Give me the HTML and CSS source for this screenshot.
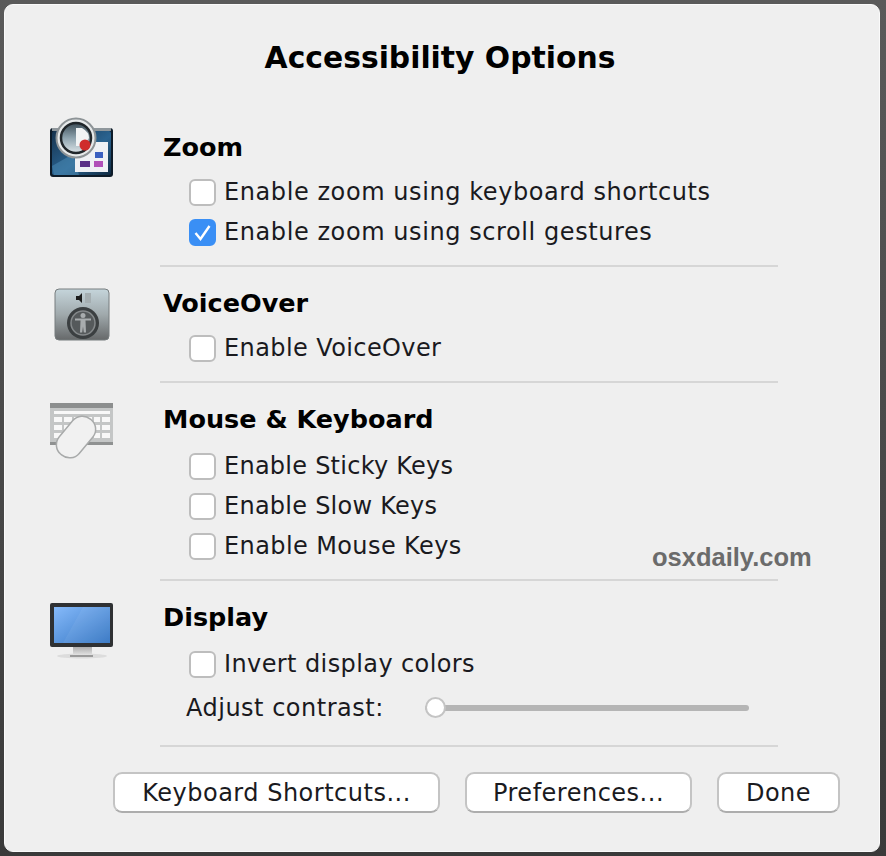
FILE: index.html
```html
<!DOCTYPE html>
<html lang="en">
<head>
<meta charset="utf-8">
<title>Accessibility Options</title>
<link rel="stylesheet" href="styles.css">
</head>
<body>
<main class="dialog">
  <h1 class="title">Accessibility Options</h1>

  <section class="section sec-zoom">
    <div class="icon">
      <svg width="66" height="64" viewBox="0 0 66 64">
        <defs>
          <linearGradient id="zb" x1="0" y1="0" x2="1" y2="1"><stop offset="0" stop-color="#16334e"/><stop offset=".55" stop-color="#2a6390"/><stop offset="1" stop-color="#0f2a42"/></linearGradient>
          <linearGradient id="zl" x1="0" y1="0" x2="0" y2="1"><stop offset="0" stop-color="#3d4e58"/><stop offset=".5" stop-color="#8ea3ae"/><stop offset="1" stop-color="#dbe3e7"/></linearGradient>
        </defs>
        <rect x="1" y="12" width="63" height="49" rx="3" fill="#0d1b28"/>
        <rect x="3" y="15" width="59" height="44" rx="2" fill="url(#zb)"/>
        <rect x="3" y="12" width="59" height="3" fill="#8f979c"/>
        <path d="M3 50 L24 38 L30 59 H5 Z" fill="#4a8ab4" opacity=".55"/>
        <rect x="26" y="26" width="33" height="30" fill="#eef0f4"/>
        <rect x="46" y="36" width="8" height="6" fill="#3a5fc0"/>
        <rect x="31" y="45" width="10" height="6" fill="#5a2f86"/>
        <rect x="45" y="45" width="9" height="6" fill="#b050b8"/>
        <circle cx="27" cy="22" r="19.500" fill="#e6e9ea" stroke="#8d9396" stroke-width="2"/>
        <circle cx="27" cy="22" r="15" fill="url(#zl)" stroke="#20262a" stroke-width="2.500"/>
        <path d="M27 12 h6 q7 4 7 10 l-6 8 h-7 z" fill="#f1f3f4"/>
        <circle cx="36" cy="29" r="5.500" fill="#cf2c2c"/>
      </svg>
    </div>
    <div class="body">
      <h2 class="heading">Zoom</h2>
      <label class="check wide"><span class="box"></span><span>Enable zoom using keyboard shortcuts</span></label>
      <label class="check wide"><span class="box on"><svg class="tick" viewBox="0 0 23 23"><path d="M4.500 12 L9.500 18 L18.500 5" fill="none" stroke="#fff" stroke-width="2.400"/></svg></span><span>Enable zoom using scroll gestures</span></label>
    </div>
  </section>

  <section class="section sec-voice">
    <div class="icon">
      <svg width="66" height="60" viewBox="0 0 66 60">
        <defs>
          <linearGradient id="vb" x1="0" y1="0" x2="0" y2="1"><stop offset="0" stop-color="#c5d5db"/><stop offset=".5" stop-color="#a0a9ac"/><stop offset="1" stop-color="#66696a"/></linearGradient>
        </defs>
        <rect x="6" y="5" width="54" height="51" rx="4" fill="url(#vb)" stroke="#777d7f"/>
        <path d="M27 12 h3 l3 -3 v10 l-3 -3 h-3 z" fill="#1c1c1c"/>
        <path d="M36 9 h6 v10 h-6 z" fill="#a5aeb1"/>
        <circle cx="34" cy="39" r="16" fill="#3b3f41"/>
        <circle cx="34" cy="39" r="12" fill="#55595b" stroke="#85898b" stroke-width="1.500"/>
        <circle cx="34" cy="31.500" r="2.500" fill="#a8acae"/>
        <path d="M26 34.500 h16 v2 h-5.500 l0.500 12 h-2.200 l-0.800 -6 l-0.800 6 h-2.200 l0.500 -12 h-5.500 z" fill="#a8acae"/>
      </svg>
    </div>
    <div class="body">
      <h2 class="heading">VoiceOver</h2>
      <label class="check"><span class="box"></span><span>Enable VoiceOver</span></label>
    </div>
  </section>

  <section class="section sec-mouse">
    <div class="icon">
      <svg width="66" height="60" viewBox="0 0 66 60">
        <rect x="1" y="3" width="63" height="42" fill="#c4c6c6"/>
        <rect x="1" y="3" width="63" height="5" fill="#8c8e8e"/>
        <g fill="#f8f8f8">
          <rect x="5" y="11" width="56" height="3"/>
          <rect x="5" y="17" width="8" height="5"/><rect x="15" y="17" width="8" height="5"/><rect x="25" y="17" width="8" height="5"/><rect x="35" y="17" width="8" height="5"/><rect x="45" y="17" width="6" height="5"/><rect x="53" y="17" width="8" height="5"/>
          <rect x="5" y="25" width="8" height="5"/><rect x="15" y="25" width="8" height="5"/><rect x="45" y="25" width="6" height="5"/><rect x="53" y="25" width="8" height="5"/>
          <rect x="5" y="33" width="8" height="5"/><rect x="45" y="33" width="6" height="5"/><rect x="53" y="33" width="8" height="5"/>
        </g>
        <rect x="1" y="42" width="63" height="3" fill="#8f9191"/>
        <rect x="14" y="14" width="26" height="46" rx="12.500" transform="rotate(40 27 37)" fill="#f1f1f1" stroke="#a8aaaa" stroke-width="1.500"/>
      </svg>
    </div>
    <div class="body">
      <h2 class="heading">Mouse &amp; Keyboard</h2>
      <label class="check tight"><span class="box"></span><span>Enable Sticky Keys</span></label>
      <label class="check tight"><span class="box"></span><span>Enable Slow Keys</span></label>
      <label class="check"><span class="box"></span><span>Enable Mouse Keys</span></label>
    </div>
  </section>

  <section class="section sec-display">
    <div class="icon">
      <svg width="66" height="60" viewBox="0 0 66 60">
        <defs>
          <linearGradient id="ds" x1="0" y1="0" x2="1" y2="1"><stop offset="0" stop-color="#86bafa"/><stop offset="1" stop-color="#3274c2"/></linearGradient>
          <linearGradient id="dst" x1="0" y1="0" x2="0" y2="1"><stop offset="0" stop-color="#a8a8a8"/><stop offset="1" stop-color="#e8e8e8"/></linearGradient>
        </defs>
        <ellipse cx="33" cy="56" rx="25" ry="2.500" fill="#dcdcdc"/>
        <rect x="24" y="46" width="19" height="10" fill="url(#dst)"/>
        <rect x="21" y="55" width="23" height="2" fill="#9a9a9a"/>
        <rect x="1" y="3" width="63" height="44" rx="2" fill="#2f3133"/>
        <rect x="5" y="7" width="56" height="36" fill="url(#ds)"/>
        <path d="M34 7 H61 V43 H14 Z" fill="#fff" opacity=".06"/>
      </svg>
    </div>
    <div class="body">
      <h2 class="heading">Display</h2>
      <label class="check"><span class="box"></span><span>Invert display colors</span></label>
      <div class="contrast">
        <span>Adjust contrast:</span>
        <div class="slider"><span class="knob"></span></div>
      </div>
    </div>
  </section>

  <footer class="buttons">
    <button class="btn btn-kb" type="button">Keyboard Shortcuts...</button>
    <button class="btn btn-pref" type="button">Preferences...</button>
    <button class="btn btn-done" type="button">Done</button>
  </footer>

  <div class="watermark">osxdaily.com</div>
</main>
</body>
</html>
```
FILE: styles.css
```css
* { box-sizing: border-box; }
html, body { margin: 0; height: 100%; }
body {
  width: 886px;
  height: 856px;
  overflow: hidden;
  background: linear-gradient(#5a5a5a, #3a3a3a);
  padding: 4px;
  font-family: "DejaVu Sans", sans-serif;
  color: #1a1a1e;
}
.dialog {
  position: relative;
  width: 876px;
  height: 848px;
  background: #efefef;
  border: 1px solid #fafafa;
  border-radius: 9px;
  padding: 33px 0 0 0;
}
.title {
  margin: 0;
  height: 40px;
  line-height: 40px;
  text-align: center;
  font-size: 29.800px;
  font-weight: 700;
  padding-right: 4px;
  color: #000;
}
.section {
  display: flex;
  width: 773px;
}
.icon {
  width: 155px;
  padding-left: 44px;
  flex: none;
}
.icon svg { display: block; }
.body {
  flex: 1;
  border-bottom: 2px solid #d6d6d6;
}
.sec-zoom { margin-top: 23px; }
.sec-zoom .icon { padding-top: 15px; }
.sec-zoom .body { height: 166px; }
.sec-voice .body { height: 116px; }
.sec-mouse .body { height: 198px; }
.sec-display .body { height: 166px; }
.sec-voice .icon { padding-top: 17px; }
.sec-mouse .icon { padding-top: 17px; }
.sec-display .icon { padding-top: 19px; }
.heading {
  margin: 0;
  padding: 21px 0 0 3px;
  height: 63px;
  line-height: 30px;
  font-size: 25.500px;
  font-weight: 700;
  color: #000;
}
.sec-zoom .heading { padding-top: 31px; height: 71px; }
.sec-voice .heading { height: 61px; }
.check {
  display: flex;
  align-items: center;
  gap: 8px;
  height: 40px;
  padding-left: 29px;
  font-size: 24px;
  letter-spacing: 0.4px;
}
.check.wide { letter-spacing: 0.58px; }
.check.tight { letter-spacing: 0.25px; }
.box {
  flex: none;
  width: 27px;
  height: 27px;
  border: 2px solid #bdbdbd;
  border-radius: 6px;
  background: #fff;
}
.box.on {
  background: #3a8ff5;
  border-color: #3a8ff5;
}
.tick {
  display: block;
  width: 23px;
  height: 23px;
}
.contrast {
  display: flex;
  align-items: center;
  height: 48px;
  padding-left: 26px;
  font-size: 24px;
  letter-spacing: 0.5px;
}
.slider {
  position: relative;
  margin-left: 41px;
  width: 324px;
  height: 6px;
  background: #b5b5b5;
  border-radius: 3px;
}
.knob {
  position: absolute;
  left: 0;
  top: -8px;
  width: 21px;
  height: 21px;
  background: #fff;
  border: 2px solid #c4c4c4;
  border-radius: 50%;
}
.buttons {
  display: flex;
  justify-content: flex-end;
  gap: 25px;
  padding: 25px 39px 0 0;
}
.btn {
  height: 41px;
  padding: 0;
  background: #fff;
  border: 2px solid #c4c4c4;
  border-bottom-color: #adadad;
  border-radius: 9px;
  font-family: "DejaVu Sans", sans-serif;
  font-size: 24px;
  letter-spacing: 0.5px;
  color: #1a1a1e;
}
.btn-kb { width: 327px; }
.btn-pref { width: 227px; }
.btn-done { width: 123px; }
.watermark {
  position: absolute;
  left: 647px;
  top: 538px;
  font-family: "Liberation Sans", sans-serif;
  font-weight: 700;
  font-size: 25.500px;
  color: #6b6b6b;
}
```
